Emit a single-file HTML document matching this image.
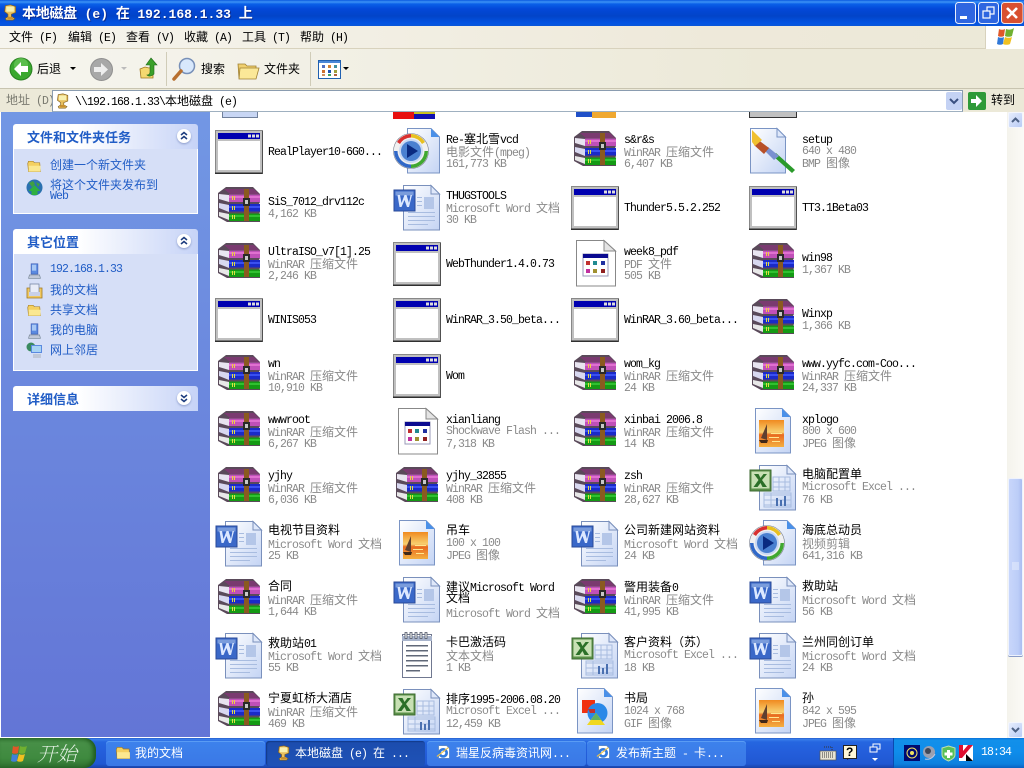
<!DOCTYPE html>
<html><head><meta charset="utf-8"><title>本地磁盘 (e) 在 192.168.1.33 上</title>
<style>
*{box-sizing:border-box}
html,body{margin:0;padding:0;width:1024px;height:768px;overflow:hidden;background:#fff}
body{position:relative;font-family:"Liberation Mono","WenQuanYi Zen Hei",monospace;font-size:11.5px;letter-spacing:-.9px;color:#000}
i{font-style:normal;font-family:"WenQuanYi Zen Hei","Noto Sans CJK SC",sans-serif;font-size:12px;letter-spacing:0}
.a{position:absolute;white-space:nowrap}
svg{position:absolute;display:block;overflow:visible}
#title{left:0;top:0;width:1024px;height:26px;background:linear-gradient(#0a5ae0 0,#3d93f5 2px,#0a60e8 4px,#0348d8 9px,#0244c8 16px,#0353e3 23px,#0a56d8 26px)}
#tt{left:22px;top:3px;height:20px;line-height:20px;color:#fff;font-weight:bold;font-size:13px;letter-spacing:0;text-shadow:1px 1px 0 #0a2a90}
#tt i{font-size:14px;font-weight:bold;letter-spacing:-.3px}
#menu{left:0;top:26px;width:1024px;height:23px;background:linear-gradient(90deg,#f6f5ee,#eee9da 70%,#ece9d8);border-bottom:1px solid #d8d2bd}
.m{top:30px;line-height:14px;height:14px;color:#000}
#tool{left:0;top:49px;width:1024px;height:40px;background:linear-gradient(90deg,#f6f5ef,#ece9d8 75%);border-bottom:1px solid #c8c4b0}
.tb{line-height:14px;height:14px}
#addr{left:0;top:89px;width:1024px;height:23px;background:#ece9d8}
#field{left:52px;top:90px;width:911px;height:22px;background:#fff;border:1px solid #8a9cb0;border-bottom-color:#9fb0c0}
#side{left:1px;top:112px;width:209px;height:625px;background:linear-gradient(#7297e4,#6375d6)}
.h{left:13px;width:185px;height:25px;border-radius:3px 3px 0 0;background:linear-gradient(90deg,#fff 0,#fff 35%,#c6d3f7);color:#215dc6;font-weight:bold;line-height:25px;padding-left:14px}
.h i{font-size:13px;font-weight:bold}
.bd{left:13px;width:185px;background:#d6dff7;border:1px solid #fff;border-top:0}
.l{left:50px;line-height:14px;height:14px;color:#215dc6}
.c{left:177px;width:14px;height:14px;border-radius:50%;background:#fff;box-shadow:0 1px 2px #8a9ac8}
#main{left:210px;top:112px;width:797px;height:626px;background:#fff;overflow:hidden}
.f{position:absolute;width:178px;height:56px}
.f svg{left:0;top:4px;width:48px;height:48px}
.f p{position:absolute;left:53px;top:1px;height:56px;margin:0;display:flex;flex-direction:column;justify-content:center;color:#8a8a8a;line-height:12px;white-space:nowrap}
.f p b{font-weight:normal;color:#000;position:relative;top:1px}
.f p b i{position:relative;top:-3px}
.f p b.x{top:-1px}
.f p b.x i{top:0}
.f p b,.f p span{display:block;height:12px;line-height:12px}
.f p span+span,.f p b+span:last-child{position:relative;top:1px}
.f p span.y{top:-1px}
#sb{left:1007px;top:112px;width:17px;height:626px;background:linear-gradient(90deg,#f4f3ec,#fbfaf6)}
.sbb{left:1008px;width:15px;height:16px;border-radius:2px;background:linear-gradient(135deg,#e6edfd,#b9cbf5);border:1px solid #f4f6fd}
#thumb{left:1008px;top:478px;width:15px;height:178px;border-radius:2px;background:linear-gradient(90deg,#c8d6fb,#bccdf8 70%,#aabdf0);border:1px solid #eef2fd;box-shadow:0 1px 0 #8a9cc8}
#task{left:0;top:738px;width:1024px;height:30px;background:linear-gradient(#1f4fc0 0,#3a80ec 1px,#2566e0 4px,#245edb 14px,#2058d2 26px,#1941a5 30px)}
#start{left:0;top:738px;width:96px;height:30px;border-radius:0 12px 12px 0;background:linear-gradient(#3a7f3a 0,#478f47 5px,#3f8a3f 20px,#2f7030 30px);box-shadow:inset -3px 0 4px #1f5a1f}
.tk{top:741px;height:25px;width:159px;border-radius:3px;background:linear-gradient(#3d82ec,#3a78e6);color:#fff;line-height:24px;padding-left:29px;box-shadow:inset 0 1px 0 #5a9cf4}
.tk.on{background:linear-gradient(#1c4cad,#1e52b7);box-shadow:inset 1px 1px 1px #123a88}
#tray{left:893px;top:738px;width:131px;height:30px;background:linear-gradient(#0c70d8 0,#1290ea 2px,#0f8deb 14px,#0d80de 26px,#0a60c0 30px);border-left:1px solid #0a4ab0}
</style></head><body>
<svg width="0" height="0" style="position:absolute"><defs>
<linearGradient id="pg" x1="0" y1="0" x2="1" y2="1"><stop offset="0" stop-color="#fff"/><stop offset="1" stop-color="#c4d4f4"/></linearGradient>
<linearGradient id="sun" x1="0" y1="0" x2="0" y2="1"><stop offset="0" stop-color="#f08a20"/><stop offset=".45" stop-color="#f8d070"/><stop offset=".55" stop-color="#e86a20"/><stop offset="1" stop-color="#f4b040"/></linearGradient>
<symbol id="exe" viewBox="0 0 48 48"><rect x="0" y="3" width="48" height="44" fill="#888"/><rect x="1" y="4" width="46" height="42" fill="#c0c0c0"/><rect x="0" y="45.500" width="48" height="1.500" fill="#303030"/><rect x="47" y="4" width="1" height="43" fill="#505050"/><rect x="3" y="6" width="42" height="6" fill="#0000b0"/><rect x="33" y="7.500" width="3" height="3" fill="#ddd"/><rect x="37" y="7.500" width="3" height="3" fill="#ddd"/><rect x="41" y="7.500" width="3" height="3" fill="#ddd"/><rect x="3" y="14" width="42" height="29" fill="#fff"/></symbol>
<symbol id="rar" viewBox="0 0 48 48"><path d="M3 10 11 4h27l7 7v8l-1 2 1 1v7l-1 2 1 1v7H12L3 34z" fill="#5a4a5a"/><path d="M4 11l10 1v7L4 16z" fill="#e8e4f0"/><path d="M4 20l10 2v7L4 25z" fill="#d8d8f0"/><path d="M4 29l10 2v6L4 33z" fill="#e8e8e8"/><path d="M9 6h30l5 5H15z" fill="#7a3a70"/><rect x="14" y="11.500" width="31" height="7.500" fill="#c050b8"/><rect x="14" y="13" width="31" height="2" fill="#e070d0"/><rect x="14" y="21" width="31" height="7.500" fill="#1a2ac8"/><rect x="14" y="23" width="31" height="2" fill="#3a50f0"/><rect x="14" y="30.500" width="31" height="7.500" fill="#149a14"/><rect x="14" y="32" width="31" height="2" fill="#30c030"/><rect x="17" y="13" width="1" height="4" fill="#f0d040"/><rect x="19" y="13" width="1" height="4" fill="#f0d040"/><rect x="17" y="23" width="1" height="4" fill="#e0e040"/><rect x="19" y="23" width="1" height="4" fill="#e0e040"/><rect x="17" y="32" width="1" height="4" fill="#e0e040"/><rect x="19" y="32" width="1" height="4" fill="#e0e040"/><path d="M29 6h5v32h-5z" fill="#8a5a20"/><rect x="28" y="15" width="7" height="8" fill="#2a2a2a"/><rect x="30" y="17" width="3" height="4" fill="#c8c8c8"/></symbol>
<symbol id="doc" viewBox="0 0 48 48"><path d="M10.500 2.500H38L46.500 11v36h-36z" fill="url(#pg)" stroke="#7a90bc"/><path d="M38 2.500V11h8.500z" fill="#dfe8fa" stroke="#7a90bc"/><rect x="31" y="14" width="10" height="12" fill="#b4c6e8"/><g fill="#a8bce0"><rect x="24" y="14" width="5" height="1"/><rect x="24" y="18" width="5" height="1"/><rect x="24" y="22" width="5" height="1"/><rect x="15" y="29" width="27" height="1"/><rect x="15" y="33" width="27" height="1"/><rect x="15" y="37" width="27" height="1"/><rect x="15" y="41" width="20" height="1"/></g><rect x="1" y="7" width="21" height="21" fill="#3a68c8" stroke="#2a4a98"/><rect x="2.500" y="8.500" width="18" height="4" fill="#7a9cdc"/><path d="M4.500 12h2.500l1.500 8 3-8h2l2.500 8 1.500-8H19l-3 12h-2l-2.500-7-3 7h-2z" fill="#dce8ff"/></symbol>
<symbol id="xls" viewBox="0 0 48 48"><path d="M10.500 2.500H38L46.500 11v36h-36z" fill="url(#pg)" stroke="#7a90bc"/><path d="M38 2.500V11h8.500z" fill="#dfe8fa" stroke="#7a90bc"/><g stroke="#a8bce0" fill="none"><path d="M24 14h17v14H24zM30 14v14M36 14v14M24 19h17M24 24h17M15 32h27M15 37h27M15 42h27"/><path d="M15 30h27v14H15zM22 30v14"/></g><g fill="#4a70b0"><rect x="27" y="35" width="2" height="8"/><rect x="31" y="37" width="2" height="6"/><rect x="35" y="33" width="2" height="10"/></g><rect x="1" y="7" width="21" height="21" fill="#5a9048" stroke="#3c6a30"/><rect x="2.500" y="8.500" width="18" height="17" fill="#c8e0b4"/><path d="M5 11h4.500l2 4 3-4H18l-5 6 5 7h-4.500l-2-4-3 4H4.500l5-7z" fill="#2c7028"/></symbol>
<symbol id="jpg" viewBox="0 0 48 48"><path d="M6.500 1.500H33L41.500 10v36h-35z" fill="url(#pg)" stroke="#7a94c4"/><path d="M33 1.500V10h8.500z" fill="#4a90e8"/><rect x="10" y="13" width="25" height="27" fill="url(#sun)"/><path d="M18 17v16l-6-2z" fill="#604030"/><path d="M19 33h-9l2 3h6z" fill="#402818"/><g fill="#ffe890"><rect x="22" y="26" width="11" height="1"/><rect x="20" y="30" width="10" height="1"/><rect x="23" y="34" width="8" height="1"/></g></symbol>
<symbol id="gif" viewBox="0 0 48 48"><path d="M6.500 1.500H33L41.500 10v36h-35z" fill="url(#pg)" stroke="#7a94c4"/><path d="M33 1.500V10h8.500z" fill="#4a90e8"/><rect x="11" y="13" width="13" height="13" fill="#f03010"/><circle cx="26.500" cy="26" r="10" fill="#2a88e8"/><path d="M17 22h7v4h-5z" fill="#c03030"/><path d="M25 26l9 12H16z" fill="#f0d820"/><path d="M25 26l5 7H20z" fill="#60b060"/></symbol>
<symbol id="bmp" viewBox="0 0 48 48"><path d="M1.500 1.500H28L36.500 10v36h-35z" fill="url(#pg)" stroke="#7a94c4"/><path d="M28 1.500V10h8.500z" fill="#dfe8fa" stroke="#7a94c4"/><path d="M27 26 46 43l-3 3-19-17z" fill="#2a9a2a"/><path d="M19 20l11 9-5 4-10-10z" fill="#7a90d0"/><path d="M8 12l12 9-5 6-10-9z" fill="#b85028"/><path d="M3 3 13 13l-7 6-3-4z" fill="#f0c030"/></symbol>
<symbol id="mpg" viewBox="0 0 48 48"><path d="M14.500 1.500H38L46.500 10v36h-32z" fill="url(#pg)" stroke="#7a94c4"/><path d="M38 1.500V10h8.500z" fill="#4a90e8"/><circle cx="18" cy="24" r="17.500" fill="#f0f0f0" stroke="#7a8090" stroke-width=".6"/><path d="M18 7a17 17 0 0 0-14 8l3 2a13.500 13.500 0 0 1 11-6.500z" fill="#d83030"/><path d="M18 7a17 17 0 0 1 14 8l-3 2a13.500 13.500 0 0 0-11-6.500z" fill="#e8c020"/><path d="M35 24a17 17 0 0 1-17 17v-3.500A13.500 13.500 0 0 0 31.500 24z" fill="#40a830"/><path d="M1 24a17 17 0 0 0 17 17v-3.500A13.500 13.500 0 0 1 4.500 24z" fill="#3068c8"/><circle cx="18" cy="24" r="12" fill="#c8d8f4"/><circle cx="18" cy="24" r="10" fill="#4a80d0"/><path d="M14 17l11 7-11 7z" fill="#0a2a80"/></symbol>
<symbol id="swf" viewBox="0 0 48 48"><path d="M5.500 1.500H33L44.500 12v35h-39z" fill="#fff" stroke="#888"/><path d="M33 1.500V12h11.500z" fill="#e4e4e4" stroke="#888"/><rect x="12" y="15" width="25" height="22" fill="#fff" stroke="#9a9ab8"/><rect x="12" y="15" width="25" height="4" fill="#0a0a90"/><g><rect x="15" y="22" width="4" height="4" fill="#c03030"/><rect x="22" y="22" width="4" height="4" fill="#208a90"/><rect x="30" y="22" width="4" height="4" fill="#2030a0"/><rect x="15" y="30" width="4" height="4" fill="#c030a0"/><rect x="22" y="30" width="4" height="4" fill="#a09030"/><rect x="30" y="30" width="4" height="4" fill="#902020"/></g></symbol>
<symbol id="txt" viewBox="0 0 48 48"><rect x="9.500" y="3.500" width="29" height="43" fill="#fff" stroke="#707890"/><rect x="9" y="5" width="30" height="5" fill="#a8b4cc"/><g fill="#f4f4f4" stroke="#505868" stroke-width=".8"><rect x="12" y="1.500" width="2" height="6"/><rect x="17" y="1.500" width="2" height="6"/><rect x="22" y="1.500" width="2" height="6"/><rect x="27" y="1.500" width="2" height="6"/><rect x="32" y="1.500" width="2" height="6"/></g><g fill="#606878"><rect x="13" y="14" width="22" height="1.500"/><rect x="13" y="19" width="22" height="1.500"/><rect x="13" y="24" width="22" height="1.500"/><rect x="13" y="29" width="22" height="1.500"/><rect x="13" y="34" width="22" height="1.500"/><rect x="13" y="39" width="14" height="1.500"/></g></symbol>
<symbol id="tree" viewBox="0 0 20 20"><path d="M4 2l6-1 6 2v7l-5 2v3l4 2-2 2H5l-1-2 3-2v-3L3 9z" fill="#e8c060" stroke="#806020" stroke-width=".8"/><path d="M5 3h9v6H5z" fill="#f8f0b0"/><path d="M7 15h6v3H6z" fill="#c89030"/></symbol>
<symbol id="net" viewBox="0 0 20 20"><path d="M6 1h8v12H6z" fill="#5a8ae0" stroke="#3a5ab0" stroke-width=".7"/><path d="M7 2h5v7H7z" fill="#a8c8f4"/><path d="M4 14h12l1 4H3z" fill="#c0c8d8" stroke="#708090" stroke-width=".7"/></symbol>
<symbol id="fold" viewBox="0 0 20 20"><path d="M1 6l1-3h6l2 2h7l1 12H2z" fill="#f4d060" stroke="#a07820" stroke-width=".8"/><path d="M2 9h16v8H2z" fill="#fbe890"/></symbol>
<symbol id="ie" viewBox="0 0 18 18"><path d="M3 2h9l3 3v11H3z" fill="#fff" stroke="#7090b0" stroke-width=".6"/><circle cx="8" cy="10" r="5.500" fill="#2f7ae0"/><circle cx="8" cy="10" r="2.500" fill="#fff"/><path d="M1 14 14 4" stroke="#f0c040" stroke-width="1.200"/></symbol>
</defs></svg>

<div class="a" id="title"></div>
<svg style="left:2px;top:4px" width="17" height="17"><use href="#tree" width="17" height="17"/></svg>
<div class="a" id="tt"><i>本地磁盘</i> (e) <i>在</i> 192.168.1.33 <i>上</i></div>
<svg style="left:955px;top:2px" width="69" height="22" viewBox="0 0 69 22">
<rect x=".5" y=".5" width="20" height="21" rx="3" fill="#2f66e0" stroke="#e8eefc"/><rect x="5" y="14" width="7" height="3" fill="#fff"/>
<rect x="23.500" y=".5" width="20" height="21" rx="3" fill="#2f66e0" stroke="#e8eefc"/><rect x="32" y="5" width="7" height="7" fill="none" stroke="#fff" stroke-width="1.200"/><rect x="28" y="9" width="7" height="7" fill="#2f66e0" stroke="#fff" stroke-width="1.200"/>
<rect x="46.500" y=".5" width="21.500" height="21" rx="3" fill="#d85030" stroke="#f4e8e4"/><path d="M52 6l10 10M62 6 52 16" stroke="#fff" stroke-width="2.600"/></svg>

<div class="a" id="menu"></div>
<div class="a m" style="left:9px"><i>文件</i> (F)</div>
<div class="a m" style="left:68px"><i>编辑</i> (E)</div>
<div class="a m" style="left:126px"><i>查看</i> (V)</div>
<div class="a m" style="left:184px"><i>收藏</i> (A)</div>
<div class="a m" style="left:242px"><i>工具</i> (T)</div>
<div class="a m" style="left:300px"><i>帮助</i> (H)</div>
<div class="a" style="left:985px;top:26px;width:39px;height:23px;background:#fff;border-left:1px solid #d8d2bd"></div>
<svg style="left:995px;top:27px" width="22" height="20" viewBox="0 0 22 20"><path d="M4 2c2 1 4 1 6 0l-1 7c-2 1-4 1-6 0z" fill="#e05828"/><path d="M11 2c3 1 5 1 8-1l-2 8c-2 1-5 1-7 0z" fill="#70b030"/><path d="M3 10c2 1 4 1 6 0l-1 7c-2 1-4 1-6 0z" fill="#3078d8"/><path d="M10 10c2 1 5 1 7 0l-2 7c-2 1-5 1-7 0z" fill="#f0c020"/></svg>

<div class="a" id="tool"></div>
<svg style="left:9px;top:57px" width="24" height="24" viewBox="0 0 24 24"><circle cx="12" cy="12" r="11" fill="#3aa82f" stroke="#2a8022"/><circle cx="12" cy="8" r="7" fill="#70cc60" opacity=".6"/><path d="M12 5v4h7v6h-7v4l-7-7z" fill="#fff"/></svg>
<div class="a tb" style="left:37px;top:62px"><i>后退</i></div>
<svg style="left:69px;top:66px" width="8" height="5"><path d="M1 1h6L4 4z" fill="#000"/></svg>
<svg style="left:90px;top:58px" width="23" height="23" viewBox="0 0 23 23"><circle cx="11.500" cy="11.500" r="11" fill="#a8a8a8" stroke="#909090"/><path d="M11 5v4H4v5h7v4l7-6.500z" fill="#eee"/></svg>
<svg style="left:120px;top:66px" width="8" height="5"><path d="M1 1h6L4 4z" fill="#bbb"/></svg>
<svg style="left:139px;top:57px" width="21" height="24" viewBox="0 0 21 24"><path d="M1 12l5-2 4 1 4-1v11H2z" fill="#f4d870" stroke="#a07820" stroke-width=".8"/><path d="M12 1l6 7h-3v9c-2 2-5 3-7 1 2 0 3-1 3-3V8H7z" fill="#3aa02a" stroke="#1f6a1a" stroke-width=".6"/></svg>
<div class="a" style="left:166px;top:52px;width:1px;height:34px;background:#d0ccb8"></div>
<svg style="left:172px;top:57px" width="26" height="25" viewBox="0 0 26 25"><circle cx="15" cy="9" r="7.500" fill="#d8e8fc" stroke="#7890b8" stroke-width="1.500"/><path d="M9 14 2 22" stroke="#b87030" stroke-width="3.500" stroke-linecap="round"/></svg>
<div class="a tb" style="left:201px;top:62px"><i>搜索</i></div>
<svg style="left:236px;top:59px" width="24" height="22" viewBox="0 0 24 22"><path d="M2 5h7l2 2h9v12H3z" fill="#f0d070" stroke="#a08030" stroke-width=".8"/><path d="M4 9h19l-3 11H3z" fill="#fbe898" stroke="#a08030" stroke-width=".8"/></svg>
<div class="a tb" style="left:264px;top:62px"><i>文件夹</i></div>
<div class="a" style="left:310px;top:52px;width:1px;height:34px;background:#d0ccb8"></div>
<svg style="left:318px;top:60px" width="23" height="19" viewBox="0 0 23 19"><rect x=".5" y=".5" width="22" height="18" fill="#fff" stroke="#2060b0"/><rect x="1" y="1" width="21" height="2" fill="#4a88d8"/><g><rect x="4" y="5" width="3" height="3" fill="#5070c0"/><rect x="10" y="5" width="3" height="3" fill="#d08030"/><rect x="16" y="5" width="3" height="3" fill="#4090a0"/><rect x="4" y="10" width="3" height="3" fill="#d07030"/><rect x="10" y="10" width="3" height="3" fill="#2050b0"/><rect x="16" y="10" width="3" height="3" fill="#a0a040"/><rect x="4" y="14" width="3" height="2" fill="#d09060"/><rect x="10" y="14" width="3" height="2" fill="#40a060"/><rect x="16" y="14" width="3" height="2" fill="#b06040"/></g></svg>
<svg style="left:342px;top:66px" width="8" height="5"><path d="M1 1h6L4 4z" fill="#000"/></svg>

<div class="a" id="addr"></div>
<div class="a" style="left:6px;top:93px;line-height:14px;color:#7a7a70"><i>地址</i> (D)</div>
<div class="a" id="field"></div>
<svg style="left:55px;top:93px" width="16" height="16"><use href="#tree" width="16" height="16"/></svg>
<div class="a" style="left:75px;top:94px;line-height:14px">\\192.168.1.33\<i>本地磁盘</i> (e)</div>
<svg style="left:946px;top:92px" width="16" height="18" viewBox="0 0 16 18"><rect width="16" height="18" rx="2" fill="#c4d2f4"/><path d="M4 7l4 4 4-4" fill="none" stroke="#3a5080" stroke-width="2"/></svg>
<svg style="left:968px;top:92px" width="18" height="18" viewBox="0 0 18 18"><rect width="18" height="18" rx="2" fill="#2f9a38"/><path d="M8 3l6 6-6 6v-4H3V7h5z" fill="#fff"/></svg>
<div class="a" style="left:991px;top:93px;line-height:14px"><i>转到</i></div>

<div class="a" id="side"></div>
<div class="a h" style="top:124px"><i>文件和文件夹任务</i></div>
<div class="a bd" style="top:149px;height:65px"></div>
<div class="a c" style="top:129px"></div>
<svg style="left:177px;top:129px" width="14" height="14"><path d="M4 6l3-2.500L10 6M4 10l3-2.500L10 10" fill="none" stroke="#1a3a7c" stroke-width="1.500"/></svg>
<svg style="left:26px;top:159px" width="17" height="15"><use href="#fold" width="17" height="15"/></svg>
<div class="a l" style="top:158px"><i>创建一个新文件夹</i></div>
<svg style="left:26px;top:179px" width="17" height="17" viewBox="0 0 17 17"><circle cx="8.500" cy="8.500" r="8" fill="#2a70b0"/><path d="M3 4l4-2 2 3-3 3zM10 3l4 2-2 3z" fill="#40a040"/><path d="M8.500 6l6 6h-3v4h-6v-4h-3z" fill="#30b040"/></svg>
<div class="a l" style="top:178px"><i>将这个文件夹发布到</i></div>
<div class="a l" style="top:190px">Web</div>

<div class="a h" style="top:229px"><i>其它位置</i></div>
<div class="a bd" style="top:254px;height:117px"></div>
<div class="a c" style="top:234px"></div>
<svg style="left:177px;top:234px" width="14" height="14"><path d="M4 6l3-2.500L10 6M4 10l3-2.500L10 10" fill="none" stroke="#1a3a7c" stroke-width="1.500"/></svg>
<svg style="left:26px;top:263px" width="17" height="17"><use href="#net" width="17" height="17"/></svg>
<div class="a l" style="top:263px">192.168.1.33</div>
<svg style="left:26px;top:283px" width="17" height="16" viewBox="0 0 17 16"><path d="M1 5h15v10H1z" fill="#f0c860" stroke="#a07820" stroke-width=".8"/><path d="M4 1h9v9H4z" fill="#e8ecf8" stroke="#7080a0" stroke-width=".7"/><rect x="3" y="9" width="11" height="4" fill="#c8d0e8"/></svg>
<div class="a l" style="top:283px"><i>我的文档</i></div>
<svg style="left:26px;top:303px" width="17" height="15"><use href="#fold" width="17" height="15"/></svg>
<div class="a l" style="top:303px"><i>共享文档</i></div>
<svg style="left:26px;top:323px" width="17" height="17"><use href="#net" width="17" height="17"/></svg>
<div class="a l" style="top:323px"><i>我的电脑</i></div>
<svg style="left:26px;top:342px" width="17" height="17" viewBox="0 0 17 17"><circle cx="5" cy="5" r="4.500" fill="#3a8a60"/><path d="M5 3h11v8H5z" fill="#5a8ae0"/><path d="M6 4h9v6H6z" fill="#a8d4f4"/><path d="M7 12h8v4H7z" fill="#c0c8d8"/></svg>
<div class="a l" style="top:343px"><i>网上邻居</i></div>

<div class="a h" style="top:386px;border-radius:3px 3px 0 0"><i>详细信息</i></div>
<div class="a c" style="top:391px"></div>
<svg style="left:177px;top:391px" width="14" height="14"><path d="M4 4l3 2.500L10 4M4 8l3 2.500L10 8" fill="none" stroke="#1a3a7c" stroke-width="1.500"/></svg>

<div class="a" id="main">
<div class="a" style="left:12px;top:0;width:36px;height:6px;background:#c8d6f4;border:1px solid #70809c;border-top:0"></div>
<div class="a" style="left:183px;top:0;width:21px;height:7px;background:#e81010"></div><div class="a" style="left:204px;top:0;width:21px;height:7px;background:#1010b0"></div><div class="a" style="left:204px;top:0;width:21px;height:2px;background:#c8c020"></div>
<div class="a" style="left:366px;top:0;width:16px;height:5px;background:#2050c8"></div><div class="a" style="left:382px;top:0;width:24px;height:6px;background:#f0a830"></div>
<div class="a" style="left:539px;top:0;width:48px;height:6px;background:#c0c0c0;border:1px solid #333;border-top:0"></div>

<div class="f" style="left:5px;top:11px"><svg><use href="#exe"/></svg><p><b>RealPlayer10-6G0...</b></p></div>
<div class="f" style="left:183px;top:11px"><svg><use href="#mpg"/></svg><p><b class="x">Re-<i>塞北雪</i>vcd</b><span><i>电影文件</i>(mpeg)</span><span>161,773 KB</span></p></div>
<div class="f" style="left:361px;top:11px"><svg><use href="#rar"/></svg><p><b>s&amp;r&amp;s</b><span>WinRAR <i>压缩文件</i></span><span>6,407 KB</span></p></div>
<div class="f" style="left:539px;top:11px"><svg><use href="#bmp"/></svg><p><b>setup</b><span>640 x 480</span><span class="y">BMP <i>图像</i></span></p></div>

<div class="f" style="left:5px;top:67px"><svg><use href="#rar"/></svg><p><b>SiS_7012_drv112c</b><span>4,162 KB</span></p></div>
<div class="f" style="left:183px;top:67px"><svg><use href="#doc"/></svg><p><b>THUGSTOOLS</b><span>Microsoft Word <i>文档</i></span><span>30 KB</span></p></div>
<div class="f" style="left:361px;top:67px"><svg><use href="#exe"/></svg><p><b>Thunder5.5.2.252</b></p></div>
<div class="f" style="left:539px;top:67px"><svg><use href="#exe"/></svg><p><b>TT3.1Beta03</b></p></div>

<div class="f" style="left:5px;top:123px"><svg><use href="#rar"/></svg><p><b>UltraISO_v7[1].25</b><span>WinRAR <i>压缩文件</i></span><span>2,246 KB</span></p></div>
<div class="f" style="left:183px;top:123px"><svg><use href="#exe"/></svg><p><b>WebThunder1.4.0.73</b></p></div>
<div class="f" style="left:361px;top:123px"><svg><use href="#swf"/></svg><p><b>week8_pdf</b><span>PDF <i>文件</i></span><span>505 KB</span></p></div>
<div class="f" style="left:539px;top:123px"><svg><use href="#rar"/></svg><p><b>win98</b><span>1,367 KB</span></p></div>

<div class="f" style="left:5px;top:179px"><svg><use href="#exe"/></svg><p><b>WINIS053</b></p></div>
<div class="f" style="left:183px;top:179px"><svg><use href="#exe"/></svg><p><b>WinRAR_3.50_beta...</b></p></div>
<div class="f" style="left:361px;top:179px"><svg><use href="#exe"/></svg><p><b>WinRAR_3.60_beta...</b></p></div>
<div class="f" style="left:539px;top:179px"><svg><use href="#rar"/></svg><p><b>Winxp</b><span>1,366 KB</span></p></div>

<div class="f" style="left:5px;top:235px"><svg><use href="#rar"/></svg><p><b>wn</b><span>WinRAR <i>压缩文件</i></span><span>10,910 KB</span></p></div>
<div class="f" style="left:183px;top:235px"><svg><use href="#exe"/></svg><p><b>Wom</b></p></div>
<div class="f" style="left:361px;top:235px"><svg><use href="#rar"/></svg><p><b>wom_kg</b><span>WinRAR <i>压缩文件</i></span><span>24 KB</span></p></div>
<div class="f" style="left:539px;top:235px"><svg><use href="#rar"/></svg><p><b>www.yyfc.com-Coo...</b><span>WinRAR <i>压缩文件</i></span><span>24,337 KB</span></p></div>

<div class="f" style="left:5px;top:291px"><svg><use href="#rar"/></svg><p><b>wwwroot</b><span>WinRAR <i>压缩文件</i></span><span>6,267 KB</span></p></div>
<div class="f" style="left:183px;top:291px"><svg><use href="#swf"/></svg><p><b>xianliang</b><span>Shockwave Flash ...</span><span>7,318 KB</span></p></div>
<div class="f" style="left:361px;top:291px"><svg><use href="#rar"/></svg><p><b>xinbai 2006.8</b><span>WinRAR <i>压缩文件</i></span><span>14 KB</span></p></div>
<div class="f" style="left:539px;top:291px"><svg><use href="#jpg"/></svg><p><b>xplogo</b><span>800 x 600</span><span class="y">JPEG <i>图像</i></span></p></div>

<div class="f" style="left:5px;top:347px"><svg><use href="#rar"/></svg><p><b>yjhy</b><span>WinRAR <i>压缩文件</i></span><span>6,036 KB</span></p></div>
<div class="f" style="left:183px;top:347px"><svg><use href="#rar"/></svg><p><b>yjhy_32855</b><span>WinRAR <i>压缩文件</i></span><span>408 KB</span></p></div>
<div class="f" style="left:361px;top:347px"><svg><use href="#rar"/></svg><p><b>zsh</b><span>WinRAR <i>压缩文件</i></span><span>28,627 KB</span></p></div>
<div class="f" style="left:539px;top:347px"><svg><use href="#xls"/></svg><p><b><i>电脑配置单</i></b><span>Microsoft Excel ...</span><span>76 KB</span></p></div>

<div class="f" style="left:5px;top:403px"><svg><use href="#doc"/></svg><p><b><i>电视节目资料</i></b><span>Microsoft Word <i>文档</i></span><span>25 KB</span></p></div>
<div class="f" style="left:183px;top:403px"><svg><use href="#jpg"/></svg><p><b><i>吊车</i></b><span>100 x 100</span><span class="y">JPEG <i>图像</i></span></p></div>
<div class="f" style="left:361px;top:403px"><svg><use href="#doc"/></svg><p><b><i>公司新建网站资料</i></b><span>Microsoft Word <i>文档</i></span><span>24 KB</span></p></div>
<div class="f" style="left:539px;top:403px"><svg><use href="#mpg"/></svg><p><b><i>海底总动员</i></b><span><i>视频剪辑</i></span><span>641,316 KB</span></p></div>

<div class="f" style="left:5px;top:459px"><svg><use href="#rar"/></svg><p><b><i>合同</i></b><span>WinRAR <i>压缩文件</i></span><span>1,644 KB</span></p></div>
<div class="f" style="left:183px;top:459px"><svg><use href="#doc"/></svg><p><b class="x"><i>建议</i>Microsoft Word</b><b><i>文档</i></b><span>Microsoft Word <i>文档</i></span></p></div>
<div class="f" style="left:361px;top:459px"><svg><use href="#rar"/></svg><p><b class="x"><i>警用装备</i>0</b><span>WinRAR <i>压缩文件</i></span><span>41,995 KB</span></p></div>
<div class="f" style="left:539px;top:459px"><svg><use href="#doc"/></svg><p><b><i>救助站</i></b><span>Microsoft Word <i>文档</i></span><span>56 KB</span></p></div>

<div class="f" style="left:5px;top:515px"><svg><use href="#doc"/></svg><p><b class="x"><i>救助站</i>01</b><span>Microsoft Word <i>文档</i></span><span>55 KB</span></p></div>
<div class="f" style="left:183px;top:515px"><svg><use href="#txt"/></svg><p><b><i>卡巴激活码</i></b><span><i>文本文档</i></span><span>1 KB</span></p></div>
<div class="f" style="left:361px;top:515px"><svg><use href="#xls"/></svg><p><b><i>客户资料（苏）</i></b><span>Microsoft Excel ...</span><span>18 KB</span></p></div>
<div class="f" style="left:539px;top:515px"><svg><use href="#doc"/></svg><p><b><i>兰州同创订单</i></b><span>Microsoft Word <i>文档</i></span><span>24 KB</span></p></div>

<div class="f" style="left:5px;top:571px"><svg><use href="#rar"/></svg><p><b><i>宁夏虹桥大酒店</i></b><span>WinRAR <i>压缩文件</i></span><span>469 KB</span></p></div>
<div class="f" style="left:183px;top:571px"><svg><use href="#xls"/></svg><p><b class="x"><i>排序</i>1995-2006.08.20</b><span>Microsoft Excel ...</span><span>12,459 KB</span></p></div>
<div class="f" style="left:361px;top:571px"><svg><use href="#gif"/></svg><p><b><i>书局</i></b><span>1024 x 768</span><span class="y">GIF <i>图像</i></span></p></div>
<div class="f" style="left:539px;top:571px"><svg><use href="#jpg"/></svg><p><b><i>孙</i></b><span>842 x 595</span><span class="y">JPEG <i>图像</i></span></p></div>
</div>

<div class="a" id="sb"></div>
<div class="a sbb" style="top:112px"></div>
<svg style="left:1011px;top:117px" width="9" height="6"><path d="M1 5l3.500-3.500L8 5" fill="none" stroke="#4d6185" stroke-width="2"/></svg>
<div class="a" id="thumb"></div>
<svg style="left:1012px;top:562px" width="7" height="9"><path d="M0 1h7M0 3h7M0 5h7M0 7h7" stroke="#e8eefd"/></svg>
<div class="a sbb" style="top:722px"></div>
<svg style="left:1011px;top:727px" width="9" height="6"><path d="M1 1l3.500 3.500L8 1" fill="none" stroke="#4d6185" stroke-width="2"/></svg>

<div class="a" id="task"></div>
<div class="a" id="start"></div>
<svg style="left:10px;top:745px" width="19" height="17" viewBox="0 0 19 17"><path d="M3 1c2 1 4 1 6 0l-1 7c-2 1-4 1-6 0z" fill="#e05828"/><path d="M10 1c2 1 5 1 7 0l-2 7c-2 1-4 1-6 0z" fill="#70b030"/><path d="M2 9c2 1 4 1 6 0l-1 7c-2 1-4 1-6 0z" fill="#4080d8"/><path d="M9 9c2 1 4 1 6 0l-2 7c-2 1-4 1-6 0z" fill="#f0c020"/></svg>
<div class="a" style="left:37px;top:740px;line-height:26px;color:#e8f4e8;font-style:italic;font-size:20px;letter-spacing:0;font-family:'Noto Serif CJK SC','WenQuanYi Zen Hei',serif;font-weight:200">开始</div>

<div class="a tk" style="left:106px"><i>我的文档</i></div>
<svg style="left:115px;top:745px" width="17" height="16"><use href="#fold" width="17" height="16"/></svg>
<div class="a tk on" style="left:266px"><i>本地磁盘</i> (e) <i>在</i> ...</div>
<svg style="left:276px;top:745px" width="16" height="16"><use href="#tree" width="16" height="16"/></svg>
<div class="a tk" style="left:427px"><i>瑞星反病毒资讯网</i>...</div>
<svg style="left:436px;top:744px" width="16" height="16"><use href="#ie" width="16" height="16"/></svg>
<div class="a tk" style="left:587px"><i>发布新主题</i> - <i>卡</i>...</div>
<svg style="left:596px;top:744px" width="16" height="16"><use href="#ie" width="16" height="16"/></svg>

<svg style="left:820px;top:746px" width="16" height="14" viewBox="0 0 16 14"><rect x="0" y="5" width="16" height="9" fill="#e8e4d4" stroke="#555" stroke-width=".7"/><path d="M2 7h12M2 9h12M2 11h12" stroke="#333" stroke-dasharray="1 1"/><path d="M4 1h8v4" fill="none" stroke="#333" stroke-dasharray="1 1"/></svg>
<svg style="left:843px;top:745px" width="14" height="16" viewBox="0 0 14 16"><rect x=".5" y=".5" width="13" height="13" fill="#fff8d8" stroke="#222"/><path d="M4 15l3-2h-3z" fill="#222"/></svg>
<div class="a" style="left:846px;top:746px;font-size:12px;font-weight:bold;line-height:13px;font-family:'Liberation Sans',sans-serif;letter-spacing:0">?</div>
<svg style="left:868px;top:743px" width="14" height="20" viewBox="0 0 14 20"><rect x="5" y="1" width="7" height="5" fill="none" stroke="#fff"/><rect x="2" y="4" width="7" height="5" fill="#2058d2" stroke="#fff"/><path d="M4 15h6l-3 3z" fill="#fff"/></svg>

<div class="a" id="tray"></div>
<svg style="left:904px;top:745px" width="16" height="16" viewBox="0 0 16 16"><rect width="16" height="16" fill="#000a70"/><circle cx="8" cy="8" r="5" fill="none" stroke="#f0e060"/><circle cx="8" cy="8" r="2" fill="#f0e060"/></svg>
<svg style="left:922px;top:745px" width="15" height="16" viewBox="0 0 15 16"><circle cx="7" cy="7" r="6" fill="#9aa0b0"/><circle cx="6" cy="6" r="3" fill="#404858"/><path d="M3 14c4 1 8-1 10-5" stroke="#c0c8e0" fill="none"/></svg>
<svg style="left:941px;top:745px" width="15" height="17" viewBox="0 0 15 17"><path d="M7.500 1 14 3v7c0 3-4 5-6.500 6C5 15 1 13 1 10V3z" fill="#58c058" stroke="#c0e0b0"/><path d="M6 5h3v2.500h2.500v3H9V13H6v-2.500H3.500v-3H6z" fill="#fff"/></svg>
<svg style="left:958px;top:745px" width="15" height="16" viewBox="0 0 15 16"><rect x="1" y="0" width="14" height="16" fill="#fff"/><path d="M1 0h4v6l5-6h5L9 7l-5 6H1z" fill="#e01030"/><path d="M8 9l7 7H8z" fill="#000"/></svg>
<div class="a" style="left:981px;top:746px;line-height:14px;color:#fff">18:34</div>
</body></html>
